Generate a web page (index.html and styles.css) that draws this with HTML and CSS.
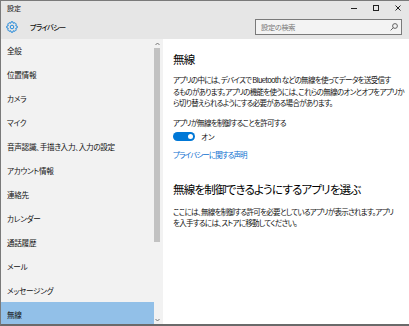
FILE: index.html
```html
<!DOCTYPE html>
<html lang="ja">
<head>
<meta charset="utf-8">
<title>設定</title>
<link rel="stylesheet" href="styles.css">
</head>
<body>
<div class="window">
  <div class="titlebar">
    <span class="caption">設定</span>
    <div class="controls">
      <span class="ctl"><svg width="6" height="6" viewBox="0 0 6 6"><line x1="0" y1="3.5" x2="6" y2="3.5" stroke="#222" stroke-width="1"/></svg></span>
      <span class="ctl"><svg width="6" height="6" viewBox="0 0 6 6"><rect x="0.5" y="0.5" width="5" height="5" fill="none" stroke="#222" stroke-width="1"/></svg></span>
      <span class="ctl"><svg width="6" height="6" viewBox="0 0 6 6"><path d="M0.5 0.5L5.5 5.5M5.5 0.5L0.5 5.5" stroke="#222" stroke-width="1"/></svg></span>
    </div>
  </div>
  <div class="header">
    <svg class="gear" width="12" height="12" viewBox="0 0 24 24"><path fill="none" stroke="#0078d7" stroke-width="1.7" stroke-linejoin="round" d="M19.56 9.40L22.31 10.00L22.31 14.00L19.56 14.60L19.19 15.51L20.70 17.87L17.87 20.70L15.51 19.19L14.60 19.56L14.00 22.31L10.00 22.31L9.40 19.56L8.49 19.19L6.13 20.70L3.30 17.87L4.81 15.51L4.44 14.60L1.69 14.00L1.69 10.00L4.44 9.40L4.81 8.49L3.30 6.13L6.13 3.30L8.49 4.81L9.40 4.44L10.00 1.69L14.00 1.69L14.60 4.44L15.51 4.81L17.87 3.30L20.70 6.13L19.19 8.49Z"/><circle cx="12" cy="12" r="3.6" fill="none" stroke="#0078d7" stroke-width="1.7"/></svg>
    <span class="pagetitle">プライバシー</span>
    <div class="search">
      <span class="placeholder">設定の検索</span>
      <svg class="searchicon" width="8" height="8" viewBox="0 0 8 8"><circle cx="5" cy="3" r="2.4" fill="none" stroke="#555" stroke-width="0.9"/><line x1="3.3" y1="4.7" x2="0.6" y2="7.4" stroke="#555" stroke-width="0.9"/></svg>
    </div>
  </div>
  <div class="main">
    <nav class="sidebar">
      <ul class="navlist">
        <li class="navitem">全般</li>
        <li class="navitem">位置情報</li>
        <li class="navitem">カメラ</li>
        <li class="navitem">マイク</li>
        <li class="navitem">音声認識、手描き入力、入力の設定</li>
        <li class="navitem">アカウント情報</li>
        <li class="navitem">連絡先</li>
        <li class="navitem">カレンダー</li>
        <li class="navitem">通話履歴</li>
        <li class="navitem">メール</li>
        <li class="navitem">メッセージング</li>
        <li class="navitem selected">無線</li>
      </ul>
      <div class="scrollbar">
        <svg class="arrow" width="5" height="4" viewBox="0 0 5 4"><polyline points="0.5,3 2.5,1 4.5,3" fill="none" stroke="#666" stroke-width="0.9"/></svg>
        <div class="thumb"></div>
        <div class="track"></div>
        <svg class="arrow" width="5" height="4" viewBox="0 0 5 4"><polyline points="0.5,1 2.5,3 4.5,1" fill="none" stroke="#666" stroke-width="0.9"/></svg>
      </div>
    </nav>
    <section class="content">
      <h1 class="heading">無線</h1>
      <p class="para">アプリの中には、デバイスで Bluetooth などの無線を使ってデータを送受信す<br>るものがあります。アプリの機能を使うには、これらの無線のオンとオフをアプリか<br>ら切り替えられるようにする必要がある場合があります。</p>
      <p class="label">アプリが無線を制御することを許可する</p>
      <div class="toggle-row">
        <span class="toggle"><span class="knob"></span></span>
        <span class="toggle-text">オン</span>
      </div>
      <a class="link" href="#">プライバシーに関する声明</a>
      <h2 class="heading heading2">無線を制御できるようにするアプリを選ぶ</h2>
      <p class="para para2">ここには、無線を制御する許可を必要としているアプリが表示されます。アプリ<br>を入手するには、ストアに移動してください。</p>
    </section>
  </div>
</div>
</body>
</html>
```

FILE: styles.css
```css
html, body {
  margin: 0;
  padding: 0;
  background: #ffffff;
}

body {
  font-family: "Noto Sans CJK JP", "Noto Sans", sans-serif;
  font-feature-settings: "palt";
  color: #000;
}

.window {
  width: 409px;
  height: 326px;
  box-sizing: border-box;
  border-top: 1px solid #7a7a7a;
  border-left: 1px solid #7a7a7a;
  border-bottom: 2px solid #6a6a6a;
  background: #e6e6e6;
  display: flex;
  flex-direction: column;
  overflow: hidden;
}

.titlebar {
  height: 14px;
  display: flex;
  align-items: center;
  justify-content: space-between;
  padding-left: 6px;
}

.caption {
  font-size: 7px;
  line-height: 1;
  color: #111;
}

.controls {
  display: flex;
  height: 14px;
}

.ctl {
  width: 22px;
  display: flex;
  align-items: center;
  justify-content: center;
}

.header {
  height: 24px;
  display: flex;
  align-items: center;
  padding-left: 5px;
}

.gear {
  display: block;
}

.pagetitle {
  margin-left: 12px;
  font-size: 7.2px;
  letter-spacing: -0.7px;
  font-weight: 500;
  color: #111;
}

.search {
  margin-left: auto;
  margin-right: 7px;
  width: 137px;
  height: 14px;
  border: 1px solid #7a7a7a;
  background: #f3f3f3;
  display: flex;
  align-items: center;
  justify-content: space-between;
  padding: 0 3px 0 5px;
}

.placeholder {
  font-size: 7.2px;
  letter-spacing: -0.3px;
  color: #777;
}

.searchicon {
  display: block;
}

.main {
  flex: 1;
  display: flex;
  min-height: 0;
}

.sidebar {
  flex: none;
  width: 162px;
  background: #f2f2f2;
  display: flex;
  overflow: hidden;
}

.navlist {
  list-style: none;
  margin: -1px 0 0 0;
  padding: 0;
  width: 153px;
}

.navitem {
  height: 24px;
  display: flex;
  align-items: center;
  padding-left: 6px;
  font-size: 7.6px;
  letter-spacing: -0.3px;
  color: #111;
  white-space: nowrap;
}

.navitem.selected {
  background: #92c0e8;
}

.scrollbar {
  width: 6px;
  display: flex;
  flex-direction: column;
  align-items: center;
}

.arrow {
  display: block;
  margin-top: 3px;
  margin-bottom: 2px;
}

.thumb {
  width: 6px;
  height: 194px;
  background: #c2c2c2;
}

.track {
  flex: 1;
}

.content {
  flex: 1;
  min-width: 0;
  overflow: hidden;
  background: #ffffff;
  padding: 12px 0 0 10px;
}

.heading {
  margin: 0;
  font-size: 11.5px;
  letter-spacing: -0.8px;
  line-height: 16px;
  font-weight: 400;
  color: #000;
}

.para {
  margin: 7px 0 0 0;
  font-size: 7.5px;
  letter-spacing: -0.7px;
  line-height: 11.5px;
  color: #111;
  white-space: nowrap;
}

.label {
  margin: 8px 0 0 0;
  font-size: 7.5px;
  letter-spacing: -0.75px;
  line-height: 11.5px;
  color: #111;
}

.toggle-row {
  display: flex;
  align-items: center;
  margin-top: 4px;
  height: 9px;
}

.toggle {
  width: 22px;
  height: 9px;
  border-radius: 5px;
  background: #0078d7;
  display: flex;
  align-items: center;
  justify-content: flex-end;
  padding-right: 2.5px;
  box-sizing: border-box;
}

.knob {
  width: 5px;
  height: 5px;
  border-radius: 50%;
  background: #ffffff;
}

.toggle-text {
  margin-left: 6px;
  font-size: 7.5px;
  color: #111;
}

.link {
  display: block;
  margin-top: 8px;
  font-size: 7.5px;
  letter-spacing: -0.9px;
  line-height: 11.5px;
  color: #0a6ecf;
  text-decoration: none;
}

.heading2 {
  margin-top: 20px;
}

.para2 {
  margin-top: 9px;
}
```
